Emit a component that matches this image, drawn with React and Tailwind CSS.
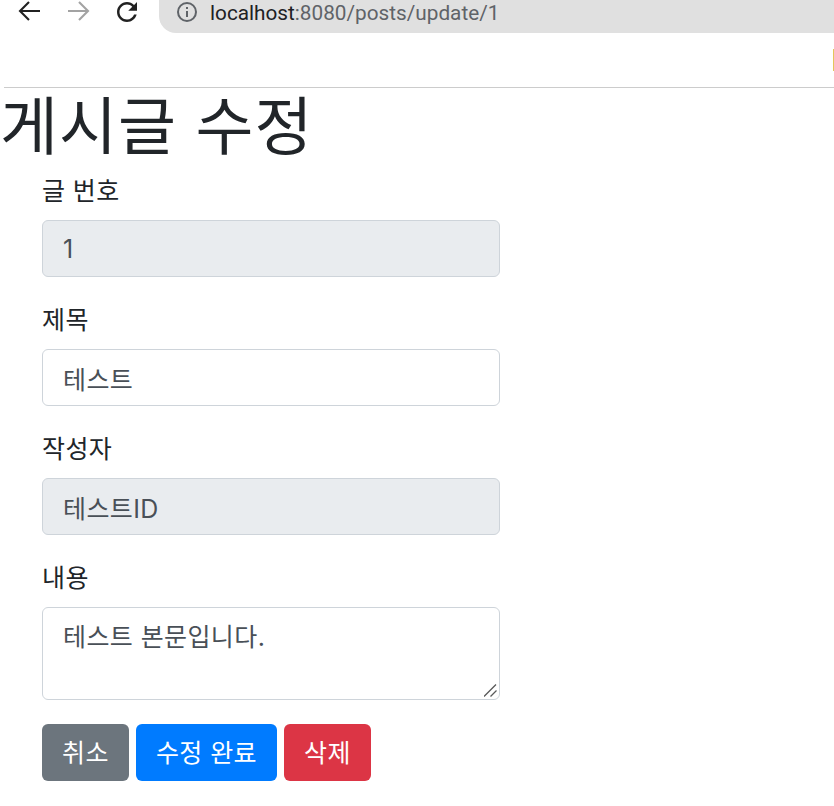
const fontStack = "font-['Inter','Noto_Sans_CJK_KR',sans-serif]";

function Field({ label, value, disabled }) {
  return (
    <div className="mb-[24px]">
      <label className="block mb-[12px] h-[36px] leading-[38px] text-[25px] tracking-[0.4px] text-[#212529]">{label}</label>
      <input
        readOnly
        value={value}
        className={`block w-[458px] h-[57px] px-[20px] pt-[1px] text-[25px] tracking-[0.4px] text-[#495057] border border-[#ced4da] rounded-[6px] outline-none ${disabled ? "bg-[#e9ecef]" : "bg-white"}`}
      />
    </div>
  );
}

function Arrow({ color }) {
  return (
    <svg width="24" height="22" viewBox="0 0 24 22" fill="none" stroke={color} strokeWidth="2.1">
      <path d="M23 11H3M12 2l-9 9 9 9" />
    </svg>
  );
}

export default function App() {
  return (
    <div className={`w-[834px] h-[806px] overflow-hidden bg-white ${fontStack}`}>
      {/* Browser toolbar */}
      <div className="flex h-[33px] items-start">
        <div className="flex w-[159px] pl-[17px] items-start">
          <Arrow color="#212121" />
          <div className="ml-[26px] rotate-180">
            <Arrow color="#a3a3a3" />
          </div>
          <svg className="ml-[21px] -mt-[3px] w-[30px] h-[30px]" viewBox="0 0 24 24" fill="#212121">
            <path d="M17.65 6.35C16.2 4.9 14.21 4 12 4c-4.42 0-7.99 3.58-7.99 8s3.57 8 7.99 8c3.73 0 6.84-2.55 7.73-6h-2.08c-.82 2.33-3.04 4-5.65 4-3.31 0-6-2.69-6-6s2.69-6 6-6c1.66 0 3.14.69 4.22 1.78L13 11h7V4l-2.35 2.35z" />
          </svg>
        </div>
        <div className="flex-1 h-[33px] bg-[#e0e0e0] rounded-bl-[17px] flex items-start pl-[16px]">
          <svg className="w-[24px] h-[24px]" viewBox="0 0 24 24" fill="none" stroke="#5f6368" strokeWidth="2">
            <circle cx="12" cy="12" r="9" />
            <path d="M12 11v6M12 7v2" />
          </svg>
          <div className="ml-[11px] -mt-[1px] text-[20.75px] leading-[28px] text-[#5f6368] font-['Roboto',sans-serif]">
            <span className="text-[#202124]">localhost</span>:8080/posts/update/1
          </div>
        </div>
      </div>

      {/* Bookmark bar */}
      <div className="flex h-[54px] justify-end items-start pt-[16px]">
        <div className="w-[1px] h-[22px] bg-[#e3c65a]" />
      </div>
      <div className="ml-[4px] h-[1px] bg-[#cccccc]" />

      <h1 className="h-[72px] leading-[76px] text-[63px] tracking-[1px] text-[#212529] font-normal">게시글 수정</h1>

      <div className="pl-[42px] pt-[12px]">
        <Field label="글 번호" value="1" disabled />
        <Field label="제목" value="테스트" />
        <Field label="작성자" value="테스트ID" disabled />

        <div className="mb-[24px]">
          <label className="block mb-[12px] h-[36px] leading-[38px] text-[25px] tracking-[0.4px] text-[#212529]">내용</label>
          <div className="relative w-[458px]">
            <textarea
              readOnly
              value="테스트 본문입니다."
              className="block w-[458px] h-[93px] px-[20px] py-[11px] text-[25px] tracking-[0.4px] leading-[36px] text-[#495057] border border-[#ced4da] rounded-[6px] outline-none resize-none"
            />
            <svg className="absolute right-[3px] bottom-[3px]" width="13" height="13" viewBox="0 0 13 13" stroke="#5a5a5a" strokeWidth="1.3">
              <path d="M0 12.5L12 .5M6.5 12.5l6-6" />
            </svg>
          </div>
        </div>

        <div className="flex gap-[7px]">
          <button className="h-[57px] w-[87px] pt-[2px] rounded-[6px] bg-[#6c757d] text-white text-[25px] tracking-[0.4px]">취소</button>
          <button className="h-[57px] w-[141px] pt-[2px] rounded-[6px] bg-[#007bff] text-white text-[25px] tracking-[0.4px]">수정 완료</button>
          <button className="h-[57px] w-[87px] pt-[2px] rounded-[6px] bg-[#dc3545] text-white text-[25px] tracking-[0.4px]">삭제</button>
        </div>
      </div>
    </div>
  );
}
